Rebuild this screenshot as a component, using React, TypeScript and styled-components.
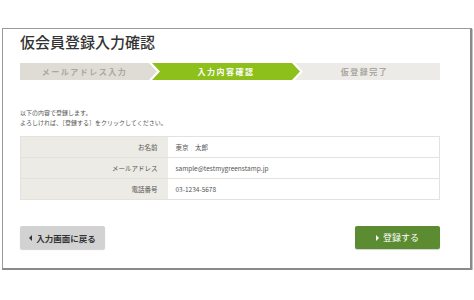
import React from "react";
import styled, { createGlobalStyle } from "styled-components";

const GlobalStyle = createGlobalStyle`
  *, *::before, *::after {
    box-sizing: border-box;
  }
  body {
    margin: 0;
    background: #fff;
    font-family: "Noto Sans CJK JP", "Noto Sans", sans-serif;
    color: #444;
  }
`;

const Page = styled.div`
  padding: 28px 0 0 2px;
`;

const Frame = styled.div`
  width: 470px;
  padding: 3px 30px 19px 17px;
  background: #fff;
  border: 1px solid #9a9a9a;
  border-right: 2px solid #8a8a8a;
  border-bottom: 2px solid #8a8a8a;
  box-shadow: 1px 1px 0 #c4c4c4;
`;

const Title = styled.h1`
  margin: 0;
  font-size: 15px;
  line-height: 20px;
  font-weight: 500;
  color: #333;
`;

const Steps = styled.div`
  display: flex;
  height: 17px;
  margin-top: 11px;
`;

const Step = styled.div<{ $state: "done" | "active" | "todo"; $first?: boolean; $last?: boolean }>`
  display: flex;
  align-items: center;
  justify-content: center;
  flex: ${(p) => (p.$last ? "1 1 auto" : p.$first ? "0 0 137px" : "0 0 148px")};
  margin-left: ${(p) => (p.$first ? "0" : "-5px")};
  padding: ${(p) => (p.$first ? "0 8px 0 0" : p.$last ? "0 14px 0 8px" : "0 8px")};
  background: ${(p) => (p.$state === "active" ? "#8dc01a" : p.$state === "done" ? "#dfdcd6" : "#ecebe7")};
  color: ${(p) => (p.$state === "active" ? "#fff" : "#aaa7a1")};
  font-size: 8px;
  font-weight: 700;
  letter-spacing: 1.5px;
  clip-path: ${(p) =>
    p.$first
      ? "polygon(0 0, calc(100% - 8px) 0, 100% 50%, calc(100% - 8px) 100%, 0 100%)"
      : p.$last
      ? "polygon(0 0, 100% 0, 100% 100%, 0 100%, 8px 50%)"
      : "polygon(0 0, calc(100% - 8px) 0, 100% 50%, calc(100% - 8px) 100%, 0 100%, 8px 50%)"};
`;

const Intro = styled.p`
  margin: 28px 0 0;
  font-size: 6px;
  line-height: 10px;
  color: #555;
`;

const Table = styled.table`
  width: 100%;
  margin-top: 8px;
  border-collapse: collapse;
  font-size: 6.5px;
  color: #555;
`;

const Row = styled.tr`
  height: 21px;
  border: 1px solid #e4e2dd;
`;

const Label = styled.th`
  width: 147px;
  padding: 0 10px 0 0;
  background: #ecebe6;
  font-weight: 400;
  text-align: right;
`;

const Value = styled.td`
  padding: 0 0 0 8px;
  background: #fff;
`;

const Actions = styled.div`
  display: flex;
  justify-content: space-between;
  margin-top: 26px;
`;

const Button = styled.button<{ $primary?: boolean }>`
  display: flex;
  align-items: center;
  justify-content: center;
  gap: 4px;
  width: 85px;
  height: 23px;
  padding: 0;
  border: none;
  border-radius: 2px;
  font-family: inherit;
  font-size: ${(p) => (p.$primary ? "9px" : "8.5px")};
  font-weight: ${(p) => (p.$primary ? 400 : 700)};
  color: ${(p) => (p.$primary ? "#fff" : "#333")};
  background: ${(p) => (p.$primary ? "#5b8c32" : "#d2d2d2")};
  box-shadow: 0 1px 1px rgba(0, 0, 0, 0.18);
`;

const Arrow = styled.span<{ $dir: "left" | "right"; $color: string }>`
  width: 0;
  height: 0;
  border-top: 3px solid transparent;
  border-bottom: 3px solid transparent;
  ${(p) => (p.$dir === "left" ? `border-right: 3px solid ${p.$color};` : `border-left: 3px solid ${p.$color};`)}
`;

const rows = [
  { label: "お名前", value: "東京　太郎" },
  { label: "メールアドレス", value: "sample@testmygreenstamp.jp" },
  { label: "電話番号", value: "03-1234-5678" },
];

export default function App() {
  return (
    <Page>
      <GlobalStyle />
      <Frame>
        <Title>仮会員登録入力確認</Title>
        <Steps>
          <Step $state="done" $first>
            メールアドレス入力
          </Step>
          <Step $state="active">入力内容確認</Step>
          <Step $state="todo" $last>
            仮登録完了
          </Step>
        </Steps>
        <Intro>
          以下の内容で登録します。
          <br />
          よろしければ、［登録する］をクリックしてください。
        </Intro>
        <Table>
          <tbody>
            {rows.map((row) => (
              <Row key={row.label}>
                <Label>{row.label}</Label>
                <Value>{row.value}</Value>
              </Row>
            ))}
          </tbody>
        </Table>
        <Actions>
          <Button>
            <Arrow $dir="left" $color="#333" />
            入力画面に戻る
          </Button>
          <Button $primary>
            <Arrow $dir="right" $color="#fff" />
            登録する
          </Button>
        </Actions>
      </Frame>
    </Page>
  );
}
